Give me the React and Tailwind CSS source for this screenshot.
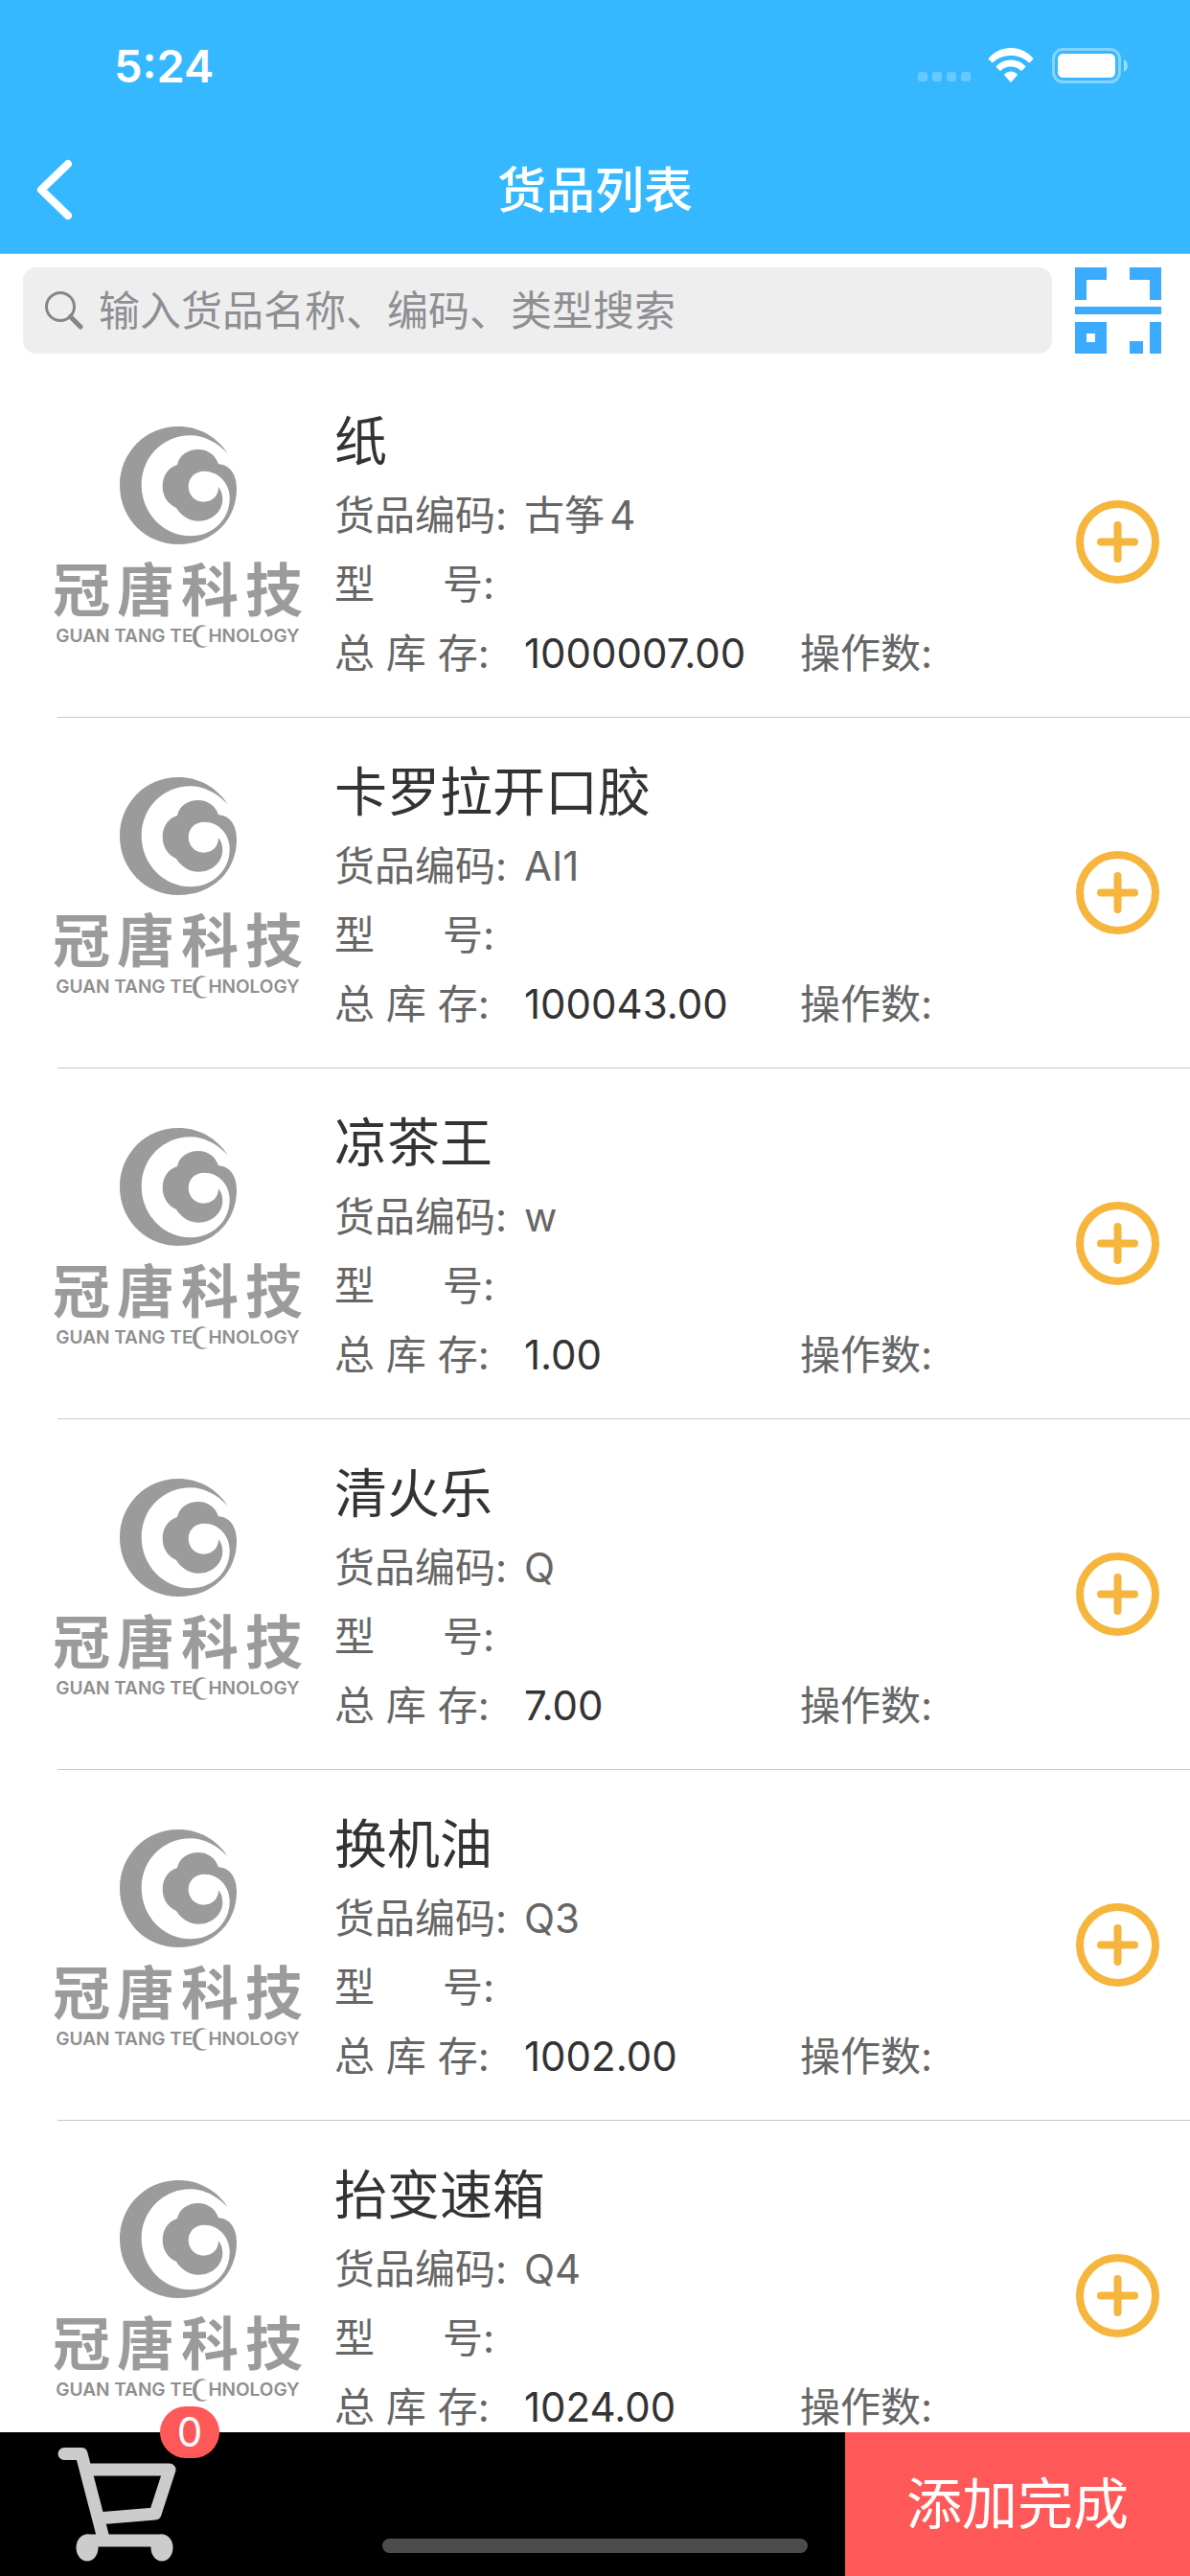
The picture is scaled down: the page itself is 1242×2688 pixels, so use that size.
import { useState } from 'react'

const GOODS = [
  { id: 1, name: '纸', code: '古筝4', model: '', stock: '1000007.00' },
  { id: 2, name: '卡罗拉开口胶', code: 'AI1', model: '', stock: '100043.00' },
  { id: 3, name: '凉茶王', code: 'w', model: '', stock: '1.00' },
  { id: 4, name: '清火乐', code: 'Q', model: '', stock: '7.00' },
  { id: 5, name: '换机油', code: 'Q3', model: '', stock: '1002.00' },
  { id: 6, name: '抬变速箱', code: 'Q4', model: '', stock: '1024.00' },
]

function StatusBar() {
  return (
    <div className="flex h-[132px] items-center justify-between pt-1 pr-16 pl-[119px]">
      <span className="text-[47px] leading-none font-semibold">5:24</span>
      <div className="flex items-center">
        <div className="mt-6 mr-[18px] flex gap-[5px]">
          {[0, 1, 2, 3].map(i => (
            <span key={i} className="h-2.5 w-2.5 rounded-[3px] bg-white/25" />
          ))}
        </div>
        <svg className="mr-[19px] h-9 w-12" viewBox="0 0 48 36" fill="white" aria-hidden="true">
          <path d="M1 10.500C7 4 15 0 24 0s17 4 23 10.500c.6.6.6 1 0 1.600l-3 3c-.5.5-1 .5-1.500 0C37.500 10.500 31 8 24 8S10.500 10.500 5.500 15.100c-.5.5-1 .5-1.500 0l-3-3c-.6-.6-.6-1 0-1.600Z" />
          <path d="M9 18.700C13 14.700 18.300 12.500 24 12.500s11 2.200 15 6.200c.5.5.5 1 0 1.600l-3.200 3.200c-.5.5-1 .5-1.500 0-2.800-2.600-6.300-4-10.300-4s-7.500 1.400-10.300 4c-.5.5-1 .5-1.500 0L9 20.300c-.5-.6-.5-1.100 0-1.600Z" />
          <path d="M17.500 27.200c4-3.700 9-3.700 13 0 .5.500.5 1 0 1.500l-5.700 6.500c-.5.600-1.100.6-1.600 0l-5.700-6.500c-.5-.5-.5-1 0-1.500Z" />
        </svg>
        <svg className="h-[37px] w-20" viewBox="0 0 80 37" aria-hidden="true">
          <rect x="1.500" y="1.500" width="69" height="34" rx="10" fill="none" stroke="white" strokeOpacity="0.4" strokeWidth="3" />
          <rect x="6" y="6" width="60" height="25" rx="5.500" fill="white" />
          <path d="M75 12c5 2 5 11 0 13Z" fill="white" fillOpacity="0.5" />
        </svg>
      </div>
    </div>
  )
}

function NavBar() {
  return (
    <div className="grid h-[132px] grid-cols-[1fr_auto_1fr] items-center">
      <button aria-label="返回" className="ml-[38px] h-16 w-[38px]">
        <svg className="h-16 w-[38px]" viewBox="0 0 38 64" fill="none" stroke="white" strokeWidth="8" strokeLinecap="round" strokeLinejoin="round">
          <path d="M33 5 5 32l28 27" />
        </svg>
      </button>
      <h1 className="text-[51px] leading-none font-medium">货品列表</h1>
    </div>
  )
}

function SearchBar() {
  const [keyword, setKeyword] = useState('')

  return (
    <div className="flex items-center gap-6 py-[14px] pr-[30px] pl-6">
      <label className="flex h-[90px] flex-1 items-center gap-4 rounded-[14px] bg-[#eeeeee] pr-6 pl-[23px]">
        <svg className="h-10 w-10 shrink-0" viewBox="0 0 40 40" fill="none" stroke="#85858a" aria-hidden="true">
          <circle cx="16" cy="16" r="14.500" strokeWidth="3" />
          <path d="M26.500 26.500 37 37" strokeWidth="5" strokeLinecap="round" />
        </svg>
        <input
          type="search"
          aria-label="搜索货品"
          value={keyword}
          onChange={e => setKeyword(e.target.value)}
          placeholder="输入货品名称、编码、类型搜索"
          className="h-full w-full bg-transparent text-[43px] text-[#333333] outline-none placeholder:text-[#8e8e93]"
        />
      </label>
      <button aria-label="扫码" className="h-[90px] w-[90px]">
        <svg className="h-[90px] w-[90px]" viewBox="0 0 90 90" fill="#3aabff">
          <path d="M0 0h33v13H12v21H0ZM57 0h33v34H78V13H57ZM0 41h90v8H0Z" />
          <path fillRule="evenodd" d="M0 57h33v33H0ZM12 69v9h9v-9Z" />
          <path d="M57 77h14v13H57ZM78 57h12v33H78Z" />
        </svg>
      </button>
    </div>
  )
}

function GuanTangLogo() {
  return (
    <div className="flex w-[261px] shrink-0 flex-col items-center pt-[62px] text-[#9b9b9b]">
      <svg className="h-[123px] w-[122px]" viewBox="0 0 122 123" fill="currentColor" aria-hidden="true">
        <path d="M112.700 28.300C101 10 82 0 61 0C27 0 0 27 0 61.500C0 96 27 123 61 123C98 123 122 97 122 65C122 50 115 40 103 39.300C100 30 92 24 82 24C71 24 62 30 60 40C50 43 44.700 52 44.700 62.300C44.700 73 50 81 59 85C64 93 72 98.700 82.300 98.700C97 98.700 107.300 88 107.300 76C107.300 71 106 67 103 63.300C103 72 97 78.700 87.300 78.700C78 78.700 71.700 71 71.700 62.500C71.700 53 79 46.700 88 46.700C104 46.700 114.700 60 114.700 75C114.700 98 96 114.300 74 114.300C45 114.300 22.700 90 22.700 61C22.700 32 45 9.300 74 9.300C87 9.300 101 16 112.700 28.300Z" />
      </svg>
      <div className="mt-[18px] flex w-full justify-between text-[60px] leading-[60px] font-bold">
        <span>冠</span>
        <span>唐</span>
        <span>科</span>
        <span>技</span>
      </div>
      <div className="mt-[5px] flex items-center text-[19px] leading-5 font-semibold whitespace-pre text-[#8f8f8f]">
        <span>GUAN TANG TE</span>
        <svg className="h-[26px] w-4" viewBox="0 0 16 26" fill="currentColor" aria-hidden="true">
          <path d="M16 3C7 -2 0 4 0 13s7 15 16 10C8 25 4 20 4 13S8 1 16 3Z" />
        </svg>
        <span>HNOLOGY</span>
      </div>
    </div>
  )
}

function GoodsRow({ item, onAdd }) {
  return (
    <li>
      <div className="flex h-[365px] items-center pr-8 pl-[55px]">
        <div className="h-full">
          <GuanTangLogo />
        </div>
        <div className="ml-[33px] min-w-0 flex-1 text-[42px] leading-[72px] whitespace-pre text-[#666666]">
          <h2 className="pt-1 text-[55px] leading-[84px] text-[#333333]">{item.name}</h2>
          <div className="flex">
            <span className="w-[198px]">货品编码:</span>
            <span className="[text-autospace:normal]">{item.code}</span>
          </div>
          <div className="flex">
            <span className="w-[198px]">型      号:</span>
            <span>{item.model}</span>
          </div>
          <div className="flex">
            <span className="w-[198px]">总 库 存:</span>
            <span className="w-[288px] text-[#333333]">{item.stock}</span>
            <span>操作数:</span>
          </div>
        </div>
        <button aria-label={`添加${item.name}`} onClick={onAdd} className="h-[87px] w-[87px] shrink-0">
          <svg className="h-[87px] w-[87px]" viewBox="0 0 87 87" fill="none" stroke="#f6b53c" strokeWidth="8">
            <circle cx="43.500" cy="43.500" r="39.500" />
            <path d="M43.500 26v35M26 43.500h35" strokeLinecap="round" />
          </svg>
        </button>
      </div>
      <div className="ml-[60px] h-px bg-[#c8c7cc]" />
    </li>
  )
}

function CartBar({ count }) {
  return (
    <footer className="relative flex h-[150px] shrink-0 items-stretch justify-between bg-black">
      <button aria-label="购物车" className="relative ml-[60px] w-[124px]">
        <svg className="h-[120px] w-[124px]" viewBox="0 0 124 120" fill="none" stroke="#cccccc" strokeWidth="13" strokeLinecap="round" strokeLinejoin="round">
          <path d="M7 7.500h18L48 96M31 24h86L102 70l-54 4.500M31 98h78" />
          <ellipse cx="31" cy="105.500" rx="11.500" ry="14" fill="#cccccc" stroke="none" />
          <ellipse cx="109" cy="105.500" rx="11.500" ry="14" fill="#cccccc" stroke="none" />
        </svg>
        <span className="absolute -top-[27px] left-[107px] flex h-[54px] min-w-[62px] items-center justify-center rounded-full bg-[#ff5858] text-[42px] leading-none text-white">
          {count}
        </span>
      </button>
      <button className="w-[360px] bg-[#ff5858] text-[58px] leading-none text-white">添加完成</button>
      {/* home indicator */}
      <div className="absolute bottom-6 left-1/2 h-[15px] w-[444px] -translate-x-1/2 rounded-full bg-[#4c4c4c]" />
    </footer>
  )
}

export default function App() {
  const [count, setCount] = useState(0)

  return (
    <div className="flex h-screen flex-col bg-white font-[Inter,'Noto_Sans_CJK_SC',sans-serif]">
      <header className="shrink-0 border-b border-[#a9b0b5] bg-[#35b8ff] text-white">
        <StatusBar />
        <NavBar />
      </header>
      <SearchBar />
      <main className="min-h-0 flex-1 overflow-hidden">
        <ul>
          {GOODS.map(item => (
            <GoodsRow key={item.id} item={item} onAdd={() => setCount(c => c + 1)} />
          ))}
        </ul>
      </main>
      <CartBar count={count} />
    </div>
  )
}
